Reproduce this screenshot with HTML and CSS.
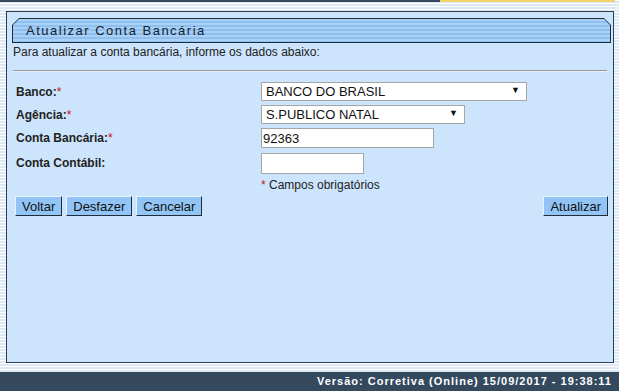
FILE: index.html
```html
<!DOCTYPE html>
<html lang="pt-BR">
<head>
<meta charset="utf-8">
<title>Atualizar Conta Bancária</title>
<link rel="stylesheet" href="styles.css">
</head>
<body>
<div class="topbar"><div class="tb-dark"></div><div class="tb-yellow"></div></div>
<div class="page">
  <div class="panel">
    <div class="title-outer"><div class="title-inner">Atualizar Conta Bancária</div></div>
    <p class="intro">Para atualizar a conta bancária, informe os dados abaixo:</p>
    <div class="rule"></div>
    <div class="form">
      <label class="lbl">Banco:<span class="req">*</span></label>
      <div class="field"><span class="sel sel-wide"><select><option>BANCO DO BRASIL</option></select></span></div>
      <label class="lbl">Agência:<span class="req">*</span></label>
      <div class="field"><span class="sel sel-mid"><select><option>S.PUBLICO NATAL</option></select></span></div>
      <label class="lbl">Conta Bancária:<span class="req">*</span></label>
      <div class="field"><input class="txt txt-a" type="text" value="92363"></div>
      <label class="lbl">Conta Contábil:</label>
      <div class="field"><input class="txt txt-b" type="text" value=""></div>
      <div></div>
      <div class="note"><span class="req">*</span> Campos obrigatórios</div>
    </div>
    <div class="actions">
      <div class="group">
        <button class="btn">Voltar</button>
        <button class="btn">Desfazer</button>
        <button class="btn">Cancelar</button>
      </div>
      <button class="btn">Atualizar</button>
    </div>
  </div>
</div>
<div class="footer">Versão: Corretiva (Online) 15/09/2017 - 19:38:11</div>
</body>
</html>
```

FILE: styles.css
```css
* { box-sizing: border-box; }
html, body { margin: 0; padding: 0; }
body {
  width: 619px;
  height: 391px;
  overflow: hidden;
  font-family: "Liberation Sans", Arial, sans-serif;
  background: repeating-linear-gradient(to bottom, #ffffff 0 1px, #dce8f4 1px 3px);
}
.topbar { display: flex; height: 2px; }
.tb-dark { width: 440px; background: #34495e; }
.tb-yellow { width: 175px; background: #f1d36a; }
.page { padding: 9px 5px 0 6px; }
.panel {
  height: 352px;
  border: 1px solid #2c3e50;
  background: #cce4fc;
  padding: 6px 2px 0 5px;
}
.title-outer {
  background: #1f2d3b;
  padding: 1px;
  height: 25px;
  clip-path: polygon(7px 0, calc(100% - 7px) 0, 100% 7px, 100% 100%, 0 100%, 0 7px);
}
.title-inner {
  height: 23px;
  clip-path: polygon(6px 0, calc(100% - 6px) 0, 100% 6px, 100% 100%, 0 100%, 0 6px);
  background: repeating-linear-gradient(to bottom, #a9d0f5 0 2px, #8fbfee 2px 4px);
  color: #16222e;
  font-size: 13px;
  letter-spacing: 1.5px;
  line-height: 23px;
  padding-left: 13px;
}
.intro {
  margin: 2px 0 0 1px;
  font-size: 12px;
  line-height: 14px;
  color: #222;
}
.rule {
  margin: 11px 4px 0 1px;
  height: 2px;
  border-top: 1px solid #9a9a9a;
  border-bottom: 1px solid #e6f0fa;
}
.form {
  margin: 10px 0 0 4px;
  display: grid;
  grid-template-columns: 245px 1fr;
  row-gap: 4px;
  align-items: center;
}
.lbl {
  font-size: 12px;
  font-weight: bold;
  color: #222;
}
.req { color: #d01010; font-weight: normal; }
.field { display: flex; }
.sel {
  position: relative;
  display: inline-block;
  height: 19px;
}
.sel select {
  appearance: none;
  -webkit-appearance: none;
  width: 100%;
  height: 19px;
  border: 1px solid #a6a6a6;
  background: #fff;
  font-family: "Liberation Sans", Arial, sans-serif;
  font-size: 13px;
  color: #111;
  padding: 0 0 0 4px;
  border-radius: 0;
  margin: 0;
}
.sel::after {
  content: "▼";
  position: absolute;
  right: 7px;
  top: 3px;
  font-size: 9px;
  color: #111;
  pointer-events: none;
}
.sel-wide { width: 266px; }
.sel-mid { width: 204px; }
.txt {
  border: 1px solid #a6a6a6;
  background: #fff;
  font-family: "Liberation Sans", Arial, sans-serif;
  font-size: 13px;
  color: #111;
  padding: 0 1px;
  margin: 0;
  border-radius: 0;
}
.txt-a { width: 173px; height: 20px; }
.txt-b { width: 103px; height: 21px; margin-top: 1px; }
.note {
  margin-top: 0;
  font-size: 12px;
  line-height: 14px;
  color: #222;
}
.actions {
  margin: 4px 3px 0 3px;
  display: flex;
  justify-content: space-between;
  align-items: flex-start;
}
.group { display: flex; gap: 4px; }
.btn {
  height: 20px;
  padding: 0 6px;
  margin: 0;
  font-family: "Liberation Sans", Arial, sans-serif;
  font-size: 13px;
  color: #111;
  background: #92c5f6;
  border: 1px solid;
  border-color: #e6f2fd #1f2d3b #1f2d3b #e6f2fd;
  border-radius: 0;
  line-height: 17px;
}
.footer {
  margin-top: 9px;
  height: 19px;
  background: #34495e;
  color: #fff;
  font-size: 11px;
  font-weight: bold;
  letter-spacing: 1px;
  text-align: right;
  padding-right: 7px;
  line-height: 19px;
}
```
